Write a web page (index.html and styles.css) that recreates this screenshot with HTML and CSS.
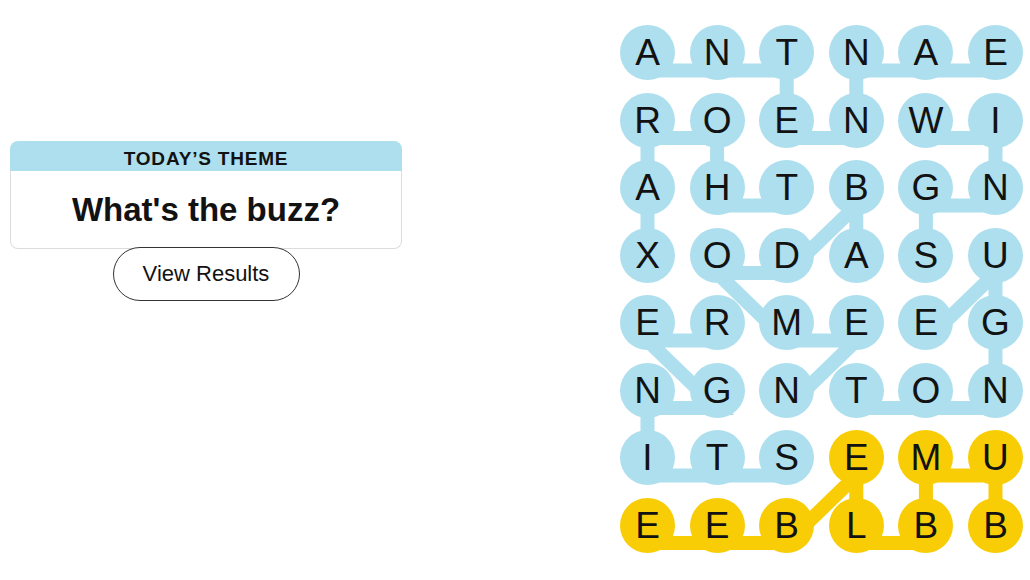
FILE: index.html
```html
<!DOCTYPE html>
<html lang="en">
<head>
    <meta charset="UTF-8">
    <meta name="viewport" content="width=device-width, initial-scale=1.0">
    <title>Strands - What's the buzz?</title>
    <link rel="stylesheet" href="styles.css">
</head>
<body>
    <div class="page">
        <section class="theme-panel">
            <div class="theme-card">
                <div class="theme-card-header">Today’s Theme</div>
                <div class="theme-card-body">What's the buzz?</div>
            </div>
            <button class="results-button">View Results</button>
        </section>

        <div class="board">
            <!-- word paths, drawn under the letters -->
            <svg class="board-lines" width="403" height="528" viewBox="0 0 403 528">
                <g class="path-theme">
                    <!-- ANTENNAE -->
                    <polyline points="27.5,45.5 97.1,45.5 166.7,45.5 166.7,113 236.3,113 236.3,45.5 305.9,45.5 375.5,45.5"/>
                    <!-- THORAX -->
                    <polyline points="166.7,180.5 97.1,180.5 97.1,113 27.5,113 27.5,180.5 27.5,248"/>
                    <!-- WINGS -->
                    <polyline points="305.9,113 375.5,113 375.5,180.5 305.9,180.5 305.9,248"/>
                    <!-- ABDOMEN -->
                    <polyline points="236.3,248 236.3,180.5 166.7,248 97.1,248 166.7,315.5 236.3,315.5 166.7,383"/>
                    <!-- TONGUE -->
                    <polyline points="236.3,383 305.9,383 375.5,383 375.5,315.5 375.5,248 305.9,315.5"/>
                    <!-- STINGER -->
                    <polyline points="166.7,450.5 97.1,450.5 27.5,450.5 27.5,383 97.1,383 27.5,315.5 97.1,315.5"/>
                </g>
                <g class="path-spangram">
                    <!-- BUMBLEBEE -->
                    <polyline points="375.5,518 375.5,450.5 305.9,450.5 305.9,518 236.3,518 236.3,450.5 166.7,518 97.1,518 27.5,518"/>
                </g>
            </svg>

            <div class="board-grid">
                <div class="cell">A</div>
                <div class="cell">N</div>
                <div class="cell">T</div>
                <div class="cell">N</div>
                <div class="cell">A</div>
                <div class="cell">E</div>

                <div class="cell">R</div>
                <div class="cell">O</div>
                <div class="cell">E</div>
                <div class="cell">N</div>
                <div class="cell">W</div>
                <div class="cell">I</div>

                <div class="cell">A</div>
                <div class="cell">H</div>
                <div class="cell">T</div>
                <div class="cell">B</div>
                <div class="cell">G</div>
                <div class="cell">N</div>

                <div class="cell">X</div>
                <div class="cell">O</div>
                <div class="cell">D</div>
                <div class="cell">A</div>
                <div class="cell">S</div>
                <div class="cell">U</div>

                <div class="cell">E</div>
                <div class="cell">R</div>
                <div class="cell">M</div>
                <div class="cell">E</div>
                <div class="cell">E</div>
                <div class="cell">G</div>

                <div class="cell">N</div>
                <div class="cell">G</div>
                <div class="cell">N</div>
                <div class="cell">T</div>
                <div class="cell">O</div>
                <div class="cell">N</div>

                <div class="cell">I</div>
                <div class="cell">T</div>
                <div class="cell">S</div>
                <div class="cell spangram">E</div>
                <div class="cell spangram">M</div>
                <div class="cell spangram">U</div>

                <div class="cell spangram">E</div>
                <div class="cell spangram">E</div>
                <div class="cell spangram">B</div>
                <div class="cell spangram">L</div>
                <div class="cell spangram">B</div>
                <div class="cell spangram">B</div>
            </div>
        </div>
    </div>
</body>
</html>
```

FILE: styles.css
```css
/* Page */
body {
    margin: 0;
    font-family: "Liberation Sans", Arial, sans-serif;
    color: #121212;
    background-color: #fff;
}

.page {
    display: flex;
    align-items: flex-start;
    padding: 25px 0 0 10px;
}

/* Theme panel */
.theme-panel {
    width: 392px;
    padding-top: 116px;
    display: flex;
    flex-direction: column;
    align-items: center;
}

.theme-card {
    width: 100%;
}

.theme-card-header {
    height: 30px;
    box-sizing: border-box;
    padding-top: 6px;
    line-height: 24px;
    text-align: center;
    font-size: 19px;
    font-weight: bold;
    text-transform: uppercase;
    letter-spacing: 0.8px;
    background-color: #aedfee;
    border-radius: 8px 8px 0 0;
}

.theme-card-body {
    height: 78px;
    box-sizing: border-box;
    display: flex;
    align-items: center;
    justify-content: center;
    font-size: 33px;
    font-weight: bold;
    border: 1px solid #dcdcdc;
    border-top: 0;
    border-radius: 0 0 8px 8px;
}

.results-button {
    width: 187px;
    height: 54px;
    margin-top: -2px;
    font-family: "Liberation Sans", Arial, sans-serif;
    font-size: 22px;
    color: #121212;
    background-color: #fff;
    border: 1px solid #333;
    border-radius: 27px;
}

/* Board */
.board {
    position: relative;
    margin-left: 218px;
    width: 403px;
}

.board-lines {
    position: absolute;
    top: 0;
    left: 0;
}

.board-lines polyline {
    fill: none;
    stroke-width: 14;
}

.path-theme polyline {
    stroke: #aedfee;
}

.path-spangram polyline {
    stroke: #f8cd05;
}

.board-grid {
    position: relative;
    display: grid;
    grid-template-columns: repeat(6, 55px);
    grid-auto-rows: 55px;
    column-gap: 14.6px;
    row-gap: 12.5px;
}

.cell {
    display: flex;
    align-items: center;
    justify-content: center;
    border-radius: 50%;
    background-color: #aedfee;
    font-size: 37px;
    line-height: 1;
}

.cell.spangram {
    background-color: #f8cd05;
}
```
